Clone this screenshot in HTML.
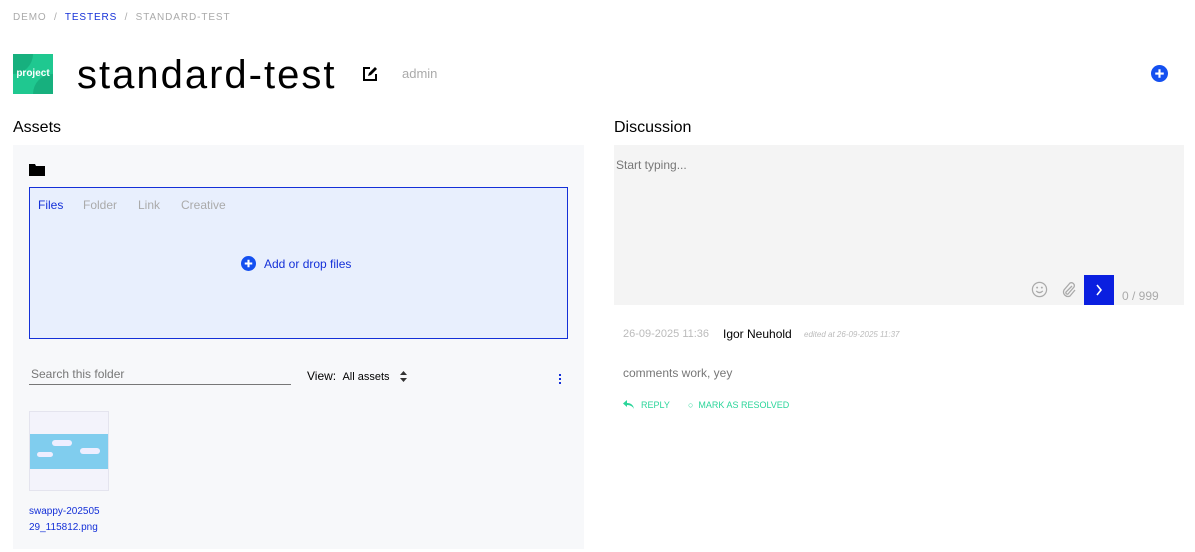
<!DOCTYPE html>
<html><head><meta charset="utf-8"><style>
*{box-sizing:border-box;margin:0;padding:0}
body{width:1195px;height:552px;background:#fff;font-family:"Liberation Sans",sans-serif;position:relative;overflow:hidden;color:#000}
.a{position:absolute}
</style></head><body>
<div class="a" style="left:13px;top:12px;font-size:10px;letter-spacing:0.9px;color:#aaa">DEMO &nbsp;/&nbsp; <span style="color:#1430d8">TESTERS</span> &nbsp;/&nbsp; STANDARD-TEST</div>
<div class="a" style="left:13px;top:54px;width:40px;height:40px;background:#1fc890;overflow:hidden">
<div class="a" style="left:0;top:0;width:20px;height:20px;background:#17b07e;border-radius:0 0 20px 0"></div>
<div class="a" style="left:20px;top:20px;width:20px;height:20px;background:#17b07e;border-radius:20px 0 0 0"></div>
<div class="a" style="left:0;top:14px;width:40px;text-align:center;color:#fff;font-size:10px;font-weight:bold">project</div></div>
<div class="a" style="left:77px;top:53px;font-size:40px;line-height:44px;letter-spacing:2px">standard-test</div>
<svg class="a" style="left:361px;top:65px" width="18" height="18" viewBox="0 0 18 18"><path d="M9 3H3v12h12V9" fill="none" stroke="#000" stroke-width="2"/><path d="M7 11l1-3 6-6 2 2-6 6z" fill="#000"/></svg>
<div class="a" style="left:402px;top:66px;font-size:13px;color:#aaa">admin</div>
<svg class="a" style="left:1151px;top:65px" width="17" height="17" viewBox="0 0 16 16"><circle cx="8" cy="8" r="8" fill="#1450f0"/><path d="M8 4v8M4 8h8" stroke="#fff" stroke-width="2"/></svg>
<div class="a" style="left:13px;top:119px;font-size:16px">Assets</div>
<div class="a" style="left:614px;top:119px;font-size:16px">Discussion</div>
<div class="a" style="left:13px;top:145px;width:571px;height:404px;background:#f7f8fa"></div>
<svg class="a" style="left:29px;top:163px" width="16" height="13" viewBox="0 0 16 13"><path d="M0 1h6l1 2h9v10H0z" fill="#000"/></svg>
<div class="a" style="left:29px;top:187px;width:539px;height:152px;background:#e8effd;border:1px solid #1430d8"></div>
<div class="a" style="left:38px;top:198px;font-size:12px;color:#1430d8">Files</div>
<div class="a" style="left:83px;top:198px;font-size:12px;color:#aaa">Folder</div>
<div class="a" style="left:138px;top:198px;font-size:12px;color:#aaa">Link</div>
<div class="a" style="left:181px;top:198px;font-size:12px;color:#aaa">Creative</div>
<svg class="a" style="left:241px;top:256px" width="15" height="15" viewBox="0 0 16 16"><circle cx="8" cy="8" r="8" fill="#1450f0"/><path d="M8 4v8M4 8h8" stroke="#fff" stroke-width="2.2"/></svg>
<div class="a" style="left:264px;top:257px;font-size:12px;color:#1430d8">Add or drop files</div>
<div class="a" style="left:29px;top:367px;width:262px;height:18px;border-bottom:1px solid #777;font-size:12px;color:#777;padding-left:2px">Search this folder</div>
<div class="a" style="left:307px;top:369px;font-size:12px">View: <span style="font-size:11px;margin-left:3px">All assets</span></div>
<svg class="a" style="left:399px;top:371px" width="9" height="11" viewBox="0 0 9 11"><path d="M1 4l3.5-4L8 4zM1 7l3.5 4L8 7z" fill="#333"/></svg>
<div class="a" style="left:559px;top:374px;width:2px;height:10px;background:repeating-linear-gradient(#1430d8 0 2px,transparent 2px 4px)"></div>
<div class="a" style="left:29px;top:411px;width:80px;height:80px;border:1px solid #e4e4ee;background:#f3f3fb"></div>
<div class="a" style="left:30px;top:434px;width:78px;height:35px;background:#80cdee"></div>
<div class="a" style="left:52px;top:440px;width:20px;height:6px;background:#eef;border-radius:4px"></div>
<div class="a" style="left:80px;top:448px;width:20px;height:6px;background:#eef;border-radius:4px"></div>
<div class="a" style="left:37px;top:452px;width:16px;height:5px;background:#eef;border-radius:4px"></div>
<div class="a" style="left:29px;top:504px;font-size:10px;line-height:16px;color:#1430d8">swappy-202505<br>29_115812.png</div>
<div class="a" style="left:614px;top:145px;width:570px;height:160px;background:#f4f4f4"></div>
<div class="a" style="left:616px;top:158px;font-size:12px;color:#777">Start typing...</div>
<svg class="a" style="left:1031px;top:281px" width="17" height="17" viewBox="0 0 18 18"><circle cx="9" cy="9" r="7.5" fill="none" stroke="#aaa" stroke-width="1.3"/><circle cx="6.5" cy="7" r="1" fill="#aaa"/><circle cx="11.5" cy="7" r="1" fill="#aaa"/><path d="M5.5 10.5q3.5 3.5 7 0" fill="none" stroke="#aaa" stroke-width="1.3"/></svg>
<svg class="a" style="left:1061px;top:281px" width="16" height="17" viewBox="0 0 16 17"><path d="M11 5l-6 6a1.5 1.5 0 0 0 2 2l6-7a3 3 0 0 0-4-4l-6 7a4.5 4.5 0 0 0 6 6l5-6" fill="none" stroke="#aaa" stroke-width="1.3"/></svg>
<div class="a" style="left:1084px;top:275px;width:30px;height:30px;background:#0a1fe0"></div>
<svg class="a" style="left:1095px;top:284px" width="8" height="12" viewBox="0 0 8 12"><path d="M2 1l4 5-4 5" fill="none" stroke="#fff" stroke-width="1.6"/></svg>
<div class="a" style="left:1122px;top:289px;font-size:12px;color:#aaa">0 / 999</div>
<div class="a" style="left:623px;top:328px;font-size:11px;color:#bbb">26-09-2025 11:36</div>
<div class="a" style="left:723px;top:327px;font-size:12px;color:#000">Igor Neuhold</div>
<div class="a" style="left:804px;top:330px;font-size:8px;color:#bbb;font-style:italic">edited at 26-09-2025 11:37</div>
<div class="a" style="left:623px;top:366px;font-size:12px;color:#777">comments work, yey</div>
<svg class="a" style="left:623px;top:400px" width="11" height="9" viewBox="0 0 11 9"><path d="M4 0L0 3.5 4 7V5q5 0 7 4-1-6-7-6z" fill="#2bd59a"/></svg>
<div class="a" style="left:641px;top:400px;font-size:9px;color:#2bd59a">REPLY</div>
<div class="a" style="left:688px;top:400px;font-size:9px;color:#2bd59a">○ &nbsp;MARK AS RESOLVED</div>
</body></html>
